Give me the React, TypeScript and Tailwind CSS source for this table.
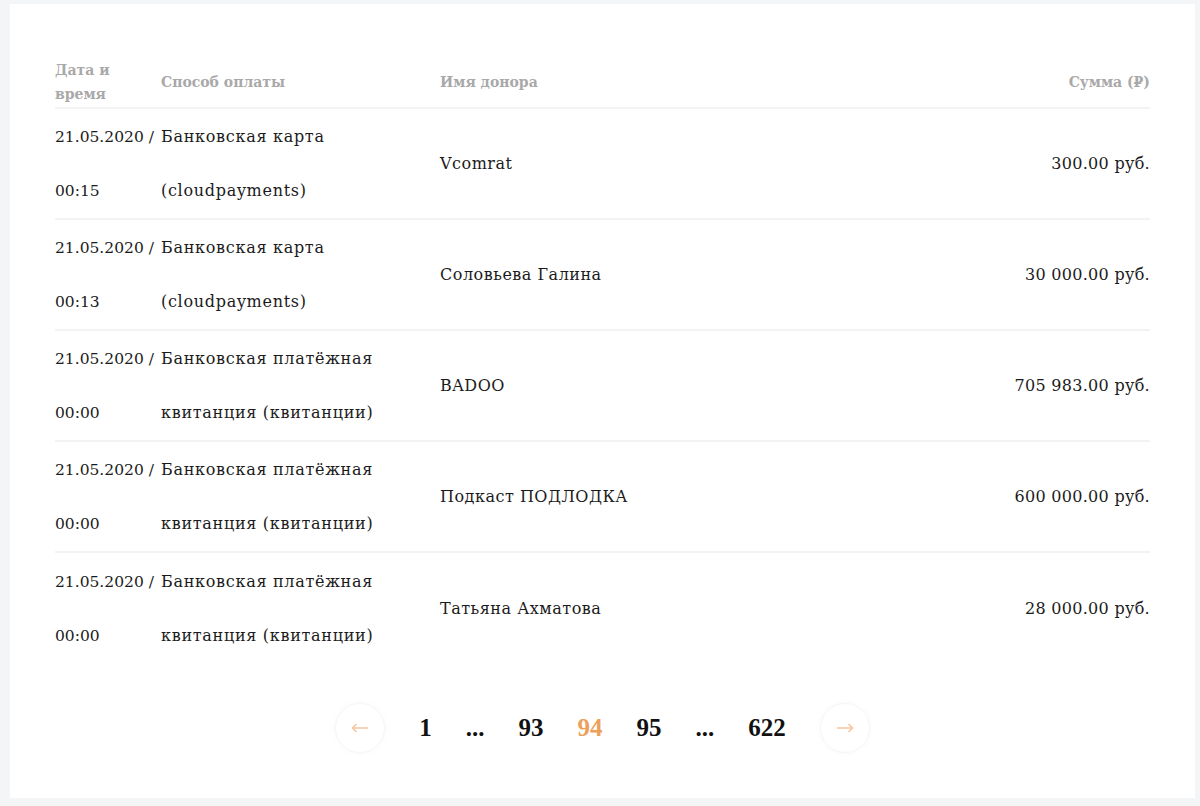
import React from "react";

const rows = [
  { date: "21.05.2020 /", time: "00:15", m1: "Банковская карта", m2: "(cloudpayments)", name: "Vcomrat", sum: "300.00 руб." },
  { date: "21.05.2020 /", time: "00:13", m1: "Банковская карта", m2: "(cloudpayments)", name: "Соловьева Галина", sum: "30 000.00 руб." },
  { date: "21.05.2020 /", time: "00:00", m1: "Банковская платёжная", m2: "квитанция (квитанции)", name: "BADOO", sum: "705 983.00 руб." },
  { date: "21.05.2020 /", time: "00:00", m1: "Банковская платёжная", m2: "квитанция (квитанции)", name: "Подкаст ПОДЛОДКА", sum: "600 000.00 руб." },
  { date: "21.05.2020 /", time: "00:00", m1: "Банковская платёжная", m2: "квитанция (квитанции)", name: "Татьяна Ахматова", sum: "28 000.00 руб." },
];

const serif = { fontFamily: '"DejaVu Serif", "Liberation Serif", serif' };

export default function App() {
  return (
    <div className="w-[1200px] h-[806px] bg-[#f4f5f7] pt-[4px] pl-[10px] pr-[5px] pb-[8px]" style={serif}>
      <div className="h-full bg-white px-[45px] pt-[54px] flex flex-col">
        <div className="grid grid-cols-[106px_279px_1fr_auto] items-center border-b-2 border-[#f3f3f3] pb-[1px] text-[14px] leading-[24px] font-bold text-[#a9a9a9]">
          <div className="w-[70px]">Дата и время</div>
          <div>Способ оплаты</div>
          <div>Имя донора</div>
          <div className="text-right">Сумма (₽)</div>
        </div>
        {rows.map((r, i) => (
          <div
            key={i}
            className={`grid grid-cols-[106px_279px_1fr_auto] items-center text-[16px] leading-[54px] text-[#1b1b1b] h-[111px] ${i < rows.length - 1 ? "border-b-2 border-[#f3f3f3]" : ""}`}
          >
            <div className="whitespace-nowrap text-[15.5px]">
              <div>{r.date}</div>
              <div>{r.time}</div>
            </div>
            <div className="whitespace-nowrap tracking-[0.7px]">
              <div>{r.m1}</div>
              <div>{r.m2}</div>
            </div>
            <div className="tracking-[0.5px]">{r.name}</div>
            <div className="text-right tracking-[0.3px]">{r.sum}</div>
          </div>
        ))}
        <div className="flex-1 flex items-start justify-center pt-[39px]">
          <div className="flex items-center gap-[34px] text-[25px] font-bold text-[#111]" style={{ fontFamily: '"Liberation Serif", serif' }}>
            <div className="w-[50px] h-[50px] rounded-full border border-[#f6f6f6] shadow-[0_0_6px_rgba(0,0,0,0.03)] flex items-center justify-center">
              <svg width="18" height="10" viewBox="0 0 18 10" fill="none" stroke="#f5c6a0" strokeWidth="1.6">
                <path d="M17 5H1.5M5.5 1L1.5 5l4 4" />
              </svg>
            </div>
            <span>1</span>
            <span>...</span>
            <span>93</span>
            <span className="text-[#eda05a]">94</span>
            <span>95</span>
            <span>...</span>
            <span>622</span>
            <div className="w-[50px] h-[50px] rounded-full border border-[#f6f6f6] shadow-[0_0_6px_rgba(0,0,0,0.03)] flex items-center justify-center">
              <svg width="18" height="10" viewBox="0 0 18 10" fill="none" stroke="#f5c6a0" strokeWidth="1.6">
                <path d="M1 5h15.5M12.5 1l4 4-4 4" />
              </svg>
            </div>
          </div>
        </div>
      </div>
    </div>
  );
}
